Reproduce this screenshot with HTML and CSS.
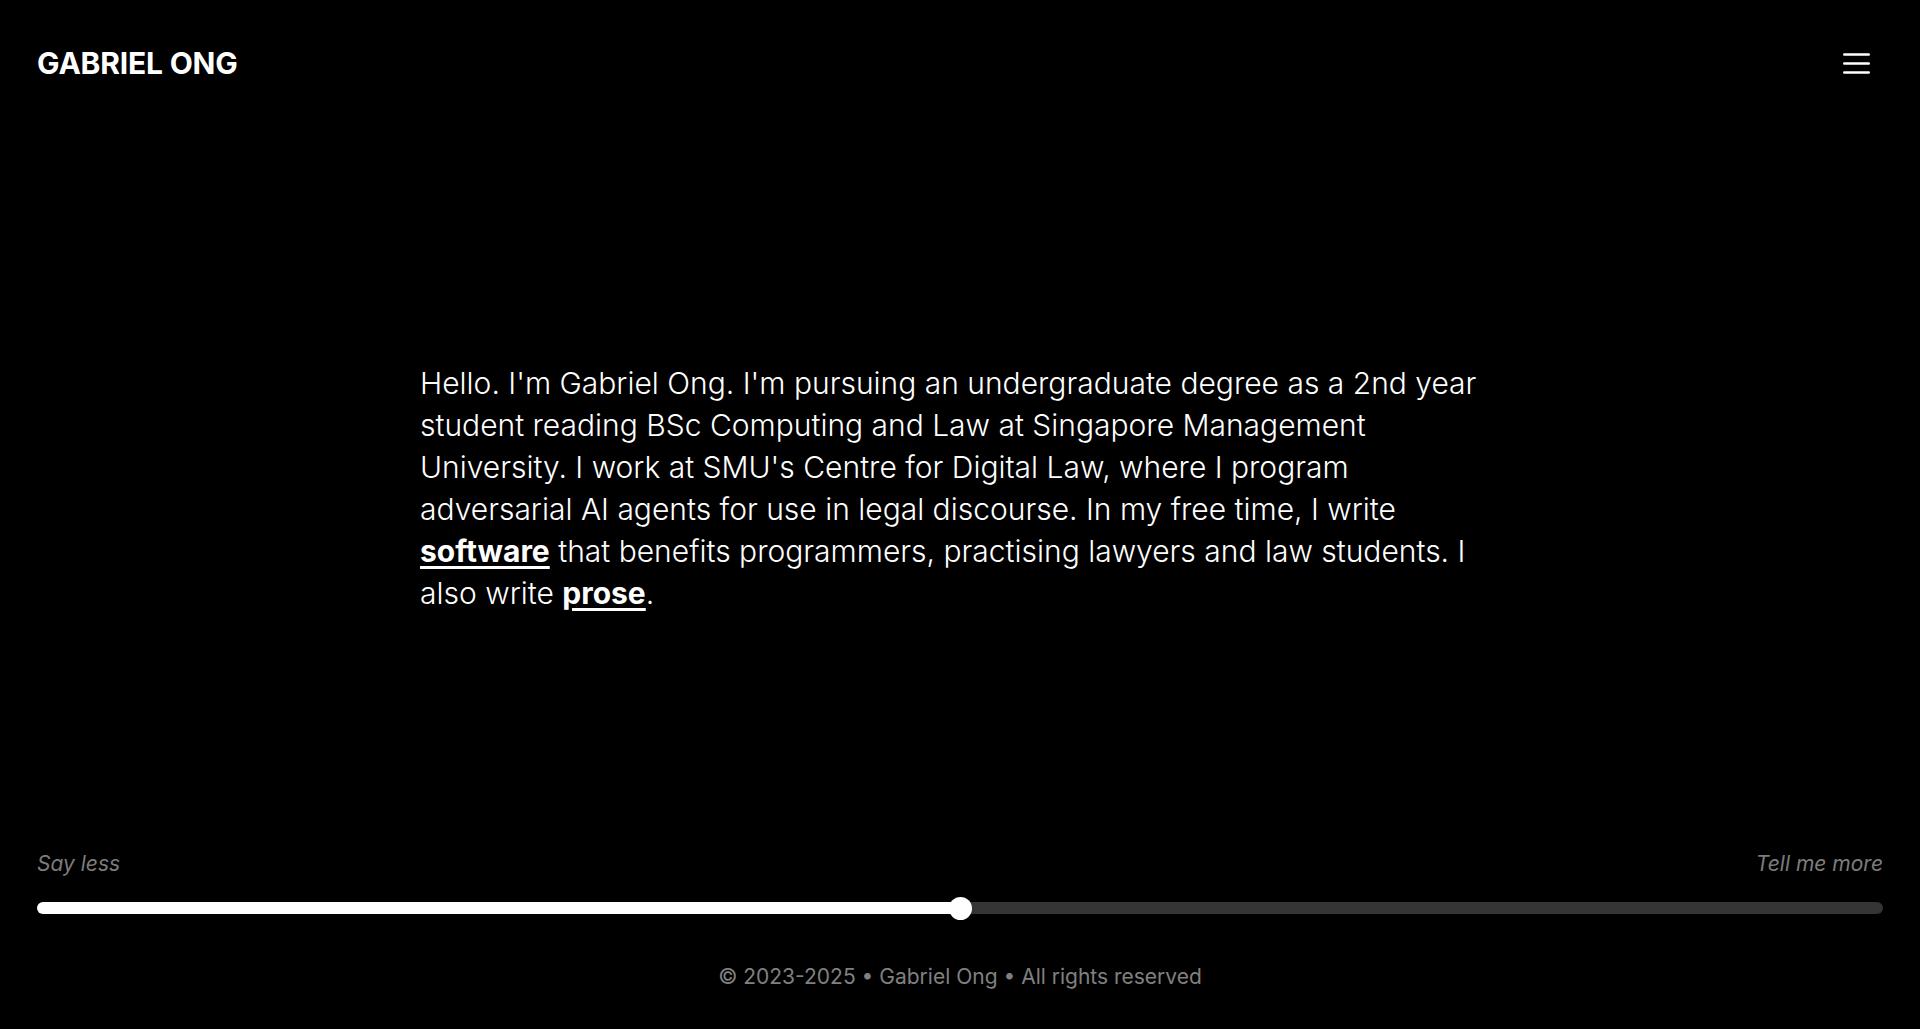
FILE: index.html
```html
<!DOCTYPE html>
<html lang="en">
<head>
<meta charset="utf-8">
<title>Gabriel Ong</title>
<link rel="stylesheet" href="styles.css">
</head>
<body>
<div class="page">
  <header class="header">
    <a class="brand" href="#">GABRIEL ONG</a>
    <button class="menu" aria-label="Menu">
      <svg width="27" height="21" viewBox="0 0 27 21" aria-hidden="true">
        <rect x="0" y="0.2" width="27" height="2.6" rx="1.3" fill="#fff"/>
        <rect x="0" y="9.2" width="27" height="2.6" rx="1.3" fill="#fff"/>
        <rect x="0" y="18.2" width="27" height="2.6" rx="1.3" fill="#fff"/>
      </svg>
    </button>
  </header>
  <main class="main">
    <p class="intro">Hello. I'm Gabriel Ong. I'm pursuing an undergraduate degree as a 2nd year student reading BSc Computing and Law at Singapore Management University. I work at SMU's Centre for Digital Law, where I program adversarial AI agents for use in legal discourse. In my free time, I write <a class="link" href="#">software</a> that benefits programmers, practising lawyers and law students. I also write <a class="link" href="#">prose</a>.</p>
  </main>
  <section class="verbosity">
    <div class="labels">
      <span>Say less</span>
      <span>Tell me more</span>
    </div>
    <input class="slider" type="range" min="0" max="100" value="50" aria-label="Verbosity">
  </section>
  <footer class="footer">© 2023-2025 • Gabriel Ong • All rights reserved</footer>
</div>
</body>
</html>
```

FILE: styles.css
```css
* { box-sizing: border-box; }
html, body {
  margin: 0;
  padding: 0;
  background: #000;
  color: #fff;
  font-family: Inter, "Noto Sans", "Liberation Sans", sans-serif;
}
.page {
  min-height: 100vh;
  height: 1029px;
  display: flex;
  flex-direction: column;
}
.header {
  display: flex;
  justify-content: space-between;
  align-items: center;
  padding: 37px 50px 35px 37px;
  height: 124px;
}
.brand {
  color: #fff;
  text-decoration: none;
  font-weight: 700;
  font-size: 30px;
  letter-spacing: -0.2px;
  line-height: 52px;
}
.menu {
  background: none;
  border: 0;
  padding: 0;
  width: 27px;
  height: 21px;
  display: flex;
  cursor: pointer;
}
.main {
  flex: 1;
  display: flex;
  align-items: center;
  justify-content: center;
}
.intro {
  margin: 0;
  width: 1080px;
  font-size: 30px;
  line-height: 42px;
  font-weight: 300;
}
.link {
  color: #fff;
  font-weight: 700;
  text-decoration: underline;
  text-decoration-thickness: 3px;
  text-underline-offset: 4px;
}
.verbosity {
  padding: 0 37px;
}
.labels {
  display: flex;
  justify-content: space-between;
  font-size: 21px;
  line-height: 24px;
  font-style: italic;
  color: #7c7c7c;
  margin-bottom: 26px;
}
.slider {
  -webkit-appearance: none;
  appearance: none;
  display: block;
  width: 100%;
  height: 12px;
  margin: 0;
  border-radius: 6px;
  background: linear-gradient(to right, #fff 50%, #353535 50%);
  outline: none;
}
.slider::-webkit-slider-thumb {
  -webkit-appearance: none;
  appearance: none;
  width: 23px;
  height: 23px;
  border-radius: 50%;
  background: #fff;
  border: 0;
}
.footer {
  margin-top: 51px;
  padding-bottom: 40px;
  text-align: center;
  font-size: 21px;
  line-height: 24px;
  color: #808080;
}
```
